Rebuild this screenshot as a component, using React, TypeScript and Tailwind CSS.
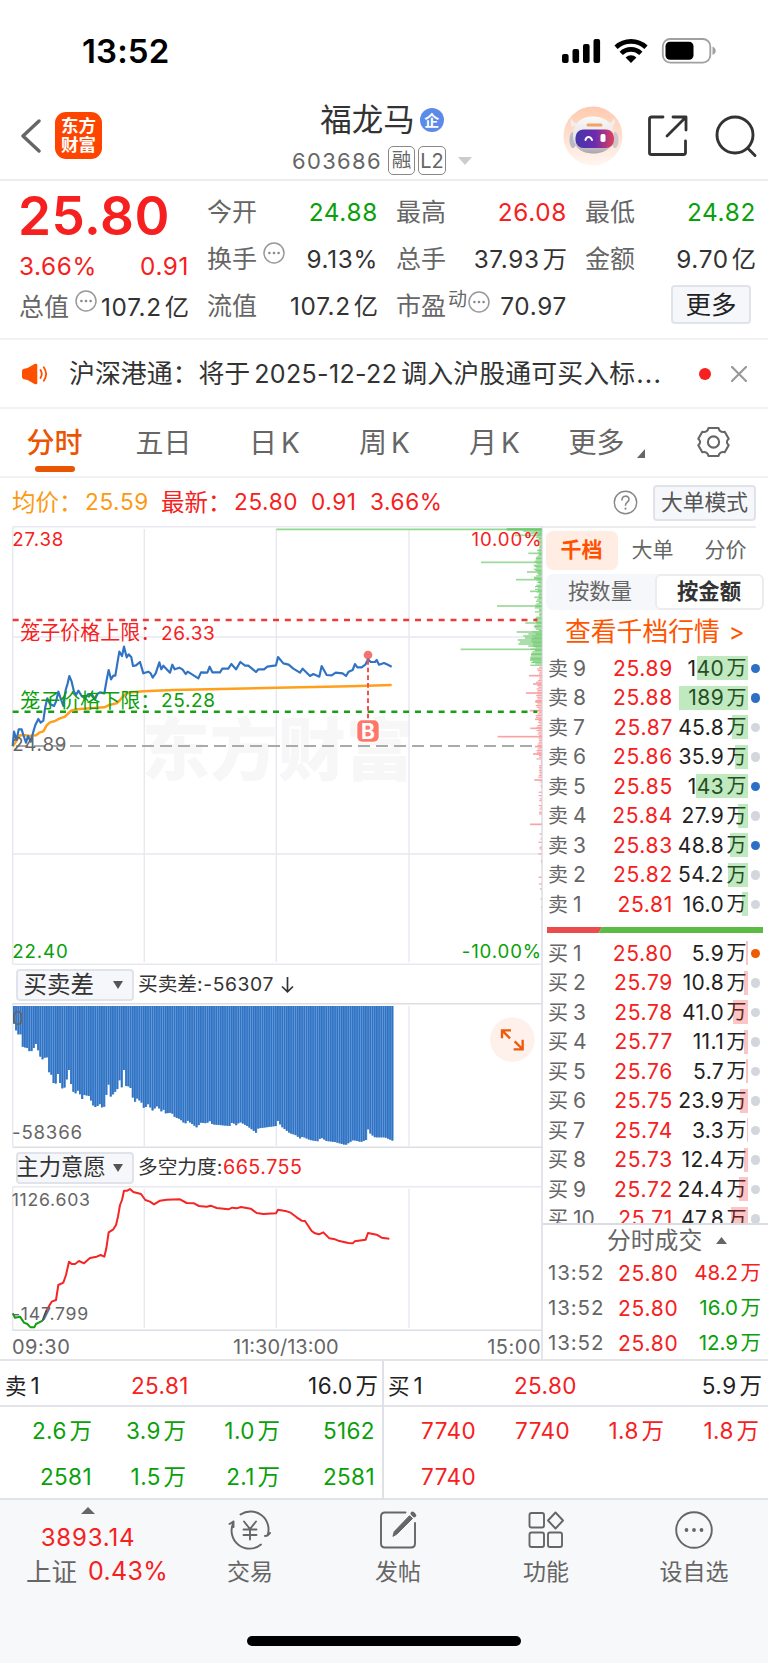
import React from 'react';

const PRICE = '38,678 42,635 50,660 56,628 65,628 70,645 78,668 84,648 92,665 100,635 106,615 115,597 122,608 130,602 136,560 142,535 150,552 162,558 168,545 175,515 182,535 190,558 197,510 203,490 208,468 215,485 222,515 228,525 235,512 245,528 255,535 265,522 275,522 285,538 292,522 300,517 313,520 320,480 326,450 333,478 340,467 346,467 352,430 358,395 366,408 372,380 380,412 386,403 394,412 399,438 408,436 420,426 430,460 445,455 452,460 458,473 467,460 478,427 484,448 490,437 510,458 517,434 524,448 538,443 548,449 557,462 563,455 595,475 603,457 622,458 629,440 637,457 660,457 667,446 685,446 694,432 708,448 721,426 735,437 745,437 768,456 775,448 792,448 802,440 828,436 834,411 850,430 866,434 880,446 900,458 908,446 930,468 940,462 958,470 965,438 980,465 995,466 1007,458 1028,460 1038,468 1046,455 1058,450 1065,432 1072,442 1085,442 1096,434 1104,418 1112,426 1125,426 1130,420 1137,434 1152,429 1165,435 1175,440';
const AVERAGE = '38,680 60,646 75,646 90,648 108,646 118,638 130,634 140,616 150,607 165,603 178,596 195,590 213,572 230,568 313,562 325,556 350,550 360,540 370,528 380,520 395,517 430,514 520,510 830,503 1050,499 1175,495';
const WILL = '140,1110 155,1085 168,1080 175,1035 190,1028 198,1005 207,965 215,972 225,972 237,963 252,970 270,954 290,950 302,945 313,950 319,925 326,877 340,868 348,855 354,830 360,795 366,780 372,752 382,752 390,747 400,756 423,762 436,780 450,785 462,793 480,782 500,779 540,778 560,789 582,790 597,798 620,800 632,797 650,804 685,808 697,803 710,805 723,801 752,806 770,819 790,822 828,820 834,809 860,814 872,818 890,832 905,842 915,843 935,873 945,880 957,883 970,877 988,895 1005,898 1015,902 1045,909 1058,910 1064,904 1097,899 1104,879 1130,884 1145,893 1168,896';

const ENVELOPE: [number, number][] = [
  [40, 245], [48, 270], [55, 283], [62, 283], [67, 320], [85, 325], [90, 338], [98, 330], [108, 312], [115, 332], [122, 352], [130, 360], [135, 352], [142, 352], [147, 396], [155, 405], [162, 434], [168, 430], [174, 402], [179, 425], [187, 445], [195, 442], [200, 420], [207, 390], [213, 430], [220, 455], [227, 460], [235, 450], [246, 478], [253, 465], [268, 468], [278, 495], [288, 502], [300, 492], [306, 502], [313, 500], [318, 470], [326, 433], [332, 470], [340, 462], [352, 448], [359, 420], [365, 445], [372, 390], [378, 438], [391, 440], [397, 470], [405, 485], [412, 475], [425, 488], [433, 507], [445, 492], [457, 512], [472, 498], [485, 515], [490, 508], [497, 520], [515, 518], [525, 532], [540, 537], [555, 552], [563, 542], [590, 562], [603, 548], [620, 550], [629, 543], [637, 553], [690, 558], [697, 546], [708, 556], [720, 546], [745, 560], [768, 578], [775, 565], [828, 558], [834, 543], [845, 560], [870, 580], [885, 584], [900, 595], [908, 590], [930, 600], [955, 604], [962, 592], [980, 603], [1005, 606], [1037, 615], [1060, 600], [1083, 606], [1098, 600], [1103, 565], [1112, 582], [1125, 592], [1155, 592], [1178, 602],
];

function depthAt(x: number) {
  for (let i = 1; i < ENVELOPE.length; i++) {
    const [x1, y1] = ENVELOPE[i];
    if (x <= x1) {
      const [x0, y0] = ENVELOPE[i - 1];
      return y0 + ((y1 - y0) * Math.max(0, x - x0)) / (x1 - x0);
    }
  }
  return ENVELOPE[ENVELOPE.length - 1][1];
}

const BARS = Array.from({ length: 173 }, (_, i) => {
  const x = 39 + i * 6.6;
  return { x, h: depthAt(x + 3) - 198 };
});

const GREEN_SPIKES: [number, number][] = [
  [33, 55], [39, 34], [46, 80], [100, 40], [127, 182], [156, 44], [179, 77], [214, 35], [232, 22], [258, 134], [309, 49], [336, 75], [342, 40], [348, 55], [354, 50], [360, 72], [366, 66], [372, 70], [378, 40], [388, 243], [402, 28], [420, 34],
];
const RED_SPIKES: [number, number][] = [
  [467, 38], [492, 26], [519, 47], [545, 20], [572, 36], [598, 20], [625, 34], [650, 132], [680, 20], [702, 26], [780, 22], [913, 35],
];
const noise = (i: number) => Math.abs(Math.sin(i * 12.9898) * 43758.5453) % 1;
const GREEN_NOISE = Array.from({ length: 102 }, (_, i) => {
  const y = 30 + i * 4;
  const base = y > 380 ? 18 : y > 330 ? 16 : 6;
  return { y, w: base + noise(i + 1) * (y > 60 && y < 110 ? 8 : 18) };
});
const RED_NOISE = Array.from({ length: 150 }, (_, i) => {
  const y = 440 + i * 5;
  const base = y < 720 ? 6 : 2;
  return { y, w: base + noise(i + 7) * (y < 720 ? 12 : 8), on: y < 760 || noise(i + 50) > 0.4 + (y - 760) / 900 };
});

const SELLS: [string, string, string, number, boolean][] = [
  ['9', '25.89', '140', 51, true], ['8', '25.88', '189', 69, true], ['7', '25.87', '45.8', 16, false], ['6', '25.86', '35.9', 13, false], ['5', '25.85', '143', 52, true], ['4', '25.84', '27.9', 10, false], ['3', '25.83', '48.8', 18, true], ['2', '25.82', '54.2', 20, false], ['1', '25.81', '16.0', 6, false],
];
const BUYS: [string, string, string, number, boolean][] = [
  ['1', '25.80', '5.9', 2, true], ['2', '25.79', '10.8', 4, false], ['3', '25.78', '41.0', 15, false], ['4', '25.77', '11.1', 4, false], ['5', '25.76', '5.7', 2, false], ['6', '25.75', '23.9', 8, false], ['7', '25.74', '3.3', 1, false], ['8', '25.73', '12.4', 4, false], ['9', '25.72', '24.4', 9, false], ['10', '25.71', '47.8', 17, false],
];

function Amount({ n, unit }: { n: string; unit?: string }) {
  return (
    <span className="whitespace-nowrap">
      {n}
      {unit && <span className="ml-[0.12em] tracking-normal">{unit}</span>}
    </span>
  );
}

function Dots({ className }: { className?: string }) {
  return (
    <svg className={className} width="22" height="22" viewBox="0 0 22 22">
      <circle cx="11" cy="11" r="10" fill="none" stroke="#999" strokeWidth="1.5" />
      <g fill="#888">
        <circle cx="6.4" cy="11" r="1.3" />
        <circle cx="11" cy="11" r="1.3" />
        <circle cx="15.6" cy="11" r="1.3" />
      </g>
    </svg>
  );
}

function StatusBar() {
  return (
    <div className="flex h-[102px] items-center justify-between pl-[82px] pr-[51px]">
      <span className="text-[33px] font-semibold leading-none tracking-[0.1px] text-black">13:52</span>
      <svg width="156" height="28" viewBox="0 0 156 28">
        <rect x="1" y="17" width="6.6" height="9" rx="2" />
        <rect x="11.5" y="12" width="6.6" height="14" rx="2" />
        <rect x="22" y="7" width="6.6" height="19" rx="2" />
        <rect x="32.5" y="2" width="6.6" height="24" rx="2" />
        <g fill="none" stroke="#000" strokeWidth="4.6">
          <path d="M55 10.3a22 22 0 0 1 30 0" />
          <path d="M60.2 16.4a14 14 0 0 1 19.600 0" />
        </g>
        <path d="M70 26l-5.4-5.6a7.8 7.8 0 0 1 10.8 0z" />
        <rect x="101.8" y="2" width="47.5" height="23.6" rx="7.5" fill="none" stroke="#a0a0a0" strokeWidth="1.8" />
        <rect x="104.5" y="4.8" width="28" height="18" rx="4.5" />
        <path d="M151.500 9.5c2 .8 3.2 2.3 3.2 4.3s-1.2 3.5-3.2 4.3z" fill="#a0a0a0" />
      </svg>
    </div>
  );
}

function Robot() {
  return (
    <svg width="60" height="60" viewBox="0 0 60 60">
      <defs>
        <linearGradient id="halo" x1="0" y1="0" x2="0" y2="1">
          <stop offset="0" stopColor="#ffc9ae" />
          <stop offset="1" stopColor="#fff6f1" />
        </linearGradient>
        <linearGradient id="visor" x1="0" y1="0" x2="1" y2="0">
          <stop offset="0" stopColor="#4438a8" />
          <stop offset=".5" stopColor="#6a2bb0" />
          <stop offset="1" stopColor="#e0405a" />
        </linearGradient>
        <linearGradient id="shell" x1="0" y1="0" x2="0" y2="1">
          <stop offset="0" stopColor="#fafafa" />
          <stop offset=".6" stopColor="#e6e2e4" />
          <stop offset="1" stopColor="#aaa4ac" />
        </linearGradient>
      </defs>
      <circle cx="30" cy="30" r="29.5" fill="url(#halo)" />
      <path d="M9 21c-2-3-2-6-.5-8.500 1 3.500 3.500 5 7 5zM49 21c3-3 4-6 2-8.500-1 3-3.500 4.500-7 5z" fill="#f3eeee" />
      <ellipse cx="10" cy="34" rx="3.500" ry="8" fill="#b9b9c6" />
      <ellipse cx="52" cy="34" rx="3.500" ry="8" fill="#cdc6cd" />
      <path d="M30 10.500c11 0 19.500 6 21 16 1 12-6 21-20.500 21S9 39 10 27c1-10.500 9-16.500 20-16.500z" fill="url(#shell)" />
      <rect x="23.500" y="17.500" width="16" height="3" rx="1.500" fill="#f2a267" />
      <rect x="12.500" y="23.500" width="38.500" height="18.500" rx="8" fill="url(#visor)" />
      <path d="M22.500 34c1-4 5-4 6.500 0" fill="none" stroke="#fff" strokeWidth="2" strokeLinecap="round" />
      <rect x="37.500" y="28" width="5" height="8" rx="1.800" fill="#fff" />
    </svg>
  );
}

function Header() {
  return (
    <header className="flex h-[79px] border-b-2 border-[#ececee]">
      <div className="flex w-[220px] shrink-0 items-start pl-[20px] pt-[10px]">
        <svg className="mt-[7px]" width="22" height="34" viewBox="0 0 22 34">
          <path d="M19 2L3 17 19 32" fill="none" stroke="#666" strokeWidth="3.4" strokeLinecap="round" strokeLinejoin="round" />
        </svg>
        <div className="ml-[13px] flex h-[47px] w-[47px] flex-col items-center justify-center rounded-[11px] bg-[#ff4400] pb-[1px] text-[17.500px] font-bold leading-[19.500px] text-white">
          <span>东方</span>
          <span>财富</span>
        </div>
      </div>
      <div className="flex w-[324px] shrink-0 flex-col items-center">
        <div className="flex h-[36px] items-center text-[31.500px] leading-none text-[#333]">
          <span>福龙马</span>
          <span className="ml-[5px] flex h-[24px] w-[24px] items-center justify-center rounded-full bg-[#5b8ae8] text-[15px] font-bold text-white">企</span>
        </div>
        <div className="mt-[7px] flex h-[31px] items-center text-[22px] leading-none text-[#666]">
          <span className="tracking-[1.3px]">603686</span>
          <span className="ml-[6px] flex h-[29px] w-[27px] items-center justify-center rounded-[5px] border-[1.500px] border-[#888] text-[19.500px]">融</span>
          <span className="ml-[3px] flex h-[29px] w-[28px] items-center justify-center rounded-[5px] border-[1.500px] border-[#888] text-[20px]">L2</span>
          <svg className="ml-[12px]" width="14" height="8" viewBox="0 0 14 8"><path d="M0 0h14L7 8z" fill="#ccc" /></svg>
        </div>
      </div>
      <div className="flex flex-1 items-start pl-[19px] pt-[4px]">
        <Robot />
        <svg className="ml-[24px] mt-[8px]" width="42" height="42" viewBox="0 0 42 42" fill="none" stroke="#333" strokeWidth="2.8" strokeLinecap="round" strokeLinejoin="round">
          <path d="M16 3H4.500Q2.500 3 2.500 5v34q0 1.500 2 1.500h32q2 0 2-2V27" />
          <path d="M26 3H39v13M38.500 3.500L20 22" />
        </svg>
        <svg className="ml-[26px] mt-[8px]" width="44" height="44" viewBox="0 0 44 44" fill="none" stroke="#333" strokeWidth="2.9" strokeLinecap="round">
          <circle cx="20" cy="21" r="18" />
          <path d="M33 34.500l7 7" />
        </svg>
      </div>
    </header>
  );
}

function Stat({ label, icon, children, color = 'text-[#333]' }: { label: React.ReactNode; icon?: boolean; children: React.ReactNode; color?: string }) {
  return (
    <div className="flex h-[47px] items-center justify-between">
      <span className="relative flex items-center text-[25px] text-[#666]">
        {label}
        {icon && <Dots className="absolute left-[56px] -top-[5px]" />}
      </span>
      <span className={`tracking-[0.7px] ${color}`}>{children}</span>
    </div>
  );
}

function Quote() {
  return (
    <section className="grid h-[159px] grid-cols-[170px_171px_171px_171px] gap-x-[18px] border-b-2 border-[#f2f2f4] pl-[19px] pt-[8px] text-[24.300px] leading-none">
      <div>
        <div className="-ml-[1px] flex h-[54px] items-center text-[53px] font-semibold tracking-[0.5px] text-[#f62020]">25.80</div>
        <div className="flex h-[46px] items-center justify-between tracking-[0.6px] text-[#f62020]">
          <span>3.66%</span>
          <span>0.91</span>
        </div>
        <div className="-mt-[5px]"><Stat label="总值" icon><span className="-ml-[6px]"><Amount n="107.2" unit="亿" /></span></Stat></div>
      </div>
      <div>
        <Stat label="今开" color="text-[#09a009]">24.88</Stat>
        <Stat label="换手" icon>9.13%</Stat>
        <Stat label="流值"><Amount n="107.2" unit="亿" /></Stat>
      </div>
      <div>
        <Stat label="最高" color="text-[#f62020]">26.08</Stat>
        <Stat label="总手"><Amount n="37.93" unit="万" /></Stat>
        <Stat label={<><span>市盈</span><span className="-mt-[14px] ml-[2px] text-[19px]">动</span><Dots className="-mt-[10px] ml-[1px]" /></>}>70.97</Stat>
      </div>
      <div>
        <Stat label="最低" color="text-[#09a009]">24.82</Stat>
        <Stat label="金额"><Amount n="9.70" unit="亿" /></Stat>
        <div className="flex justify-end pr-[5px] pt-[2px]">
          <button className="flex h-[39px] w-[80px] items-center justify-center rounded-[4px] border-2 border-[#e0e3ea] bg-[#f6f7fa] text-[25.500px] text-[#222]">更多</button>
        </div>
      </div>
    </section>
  );
}

function News() {
  return (
    <div className="flex h-[69px] items-center border-b-2 border-[#f2f2f4] pl-[22px] text-[25.900px] leading-none text-[#333]">
      <svg width="26" height="22" viewBox="0 0 26 22">
        <path d="M0 8q0-2 2-2.300L5.500 5 13 .8Q15.300.2 15.300 2v18q0 1.800-2.300 1.200L5.500 17 2 16.300Q0 16 0 14z" fill="#ff5000" />
        <path d="M18.500 7q2.500 4 0 8M21.800 4.200q4.600 6.800 0 13.600" fill="none" stroke="#ff5000" strokeWidth="1.8" strokeLinecap="round" />
      </svg>
      <span className="ml-[21px] w-[600px] whitespace-nowrap">
        沪深港通：将于<span className="ml-[4px] mr-[4px] text-[25px] tracking-[0.35px]">2025-12-22</span><span className="tracking-[0.1px]">调入沪股通可买入标</span><span className="ml-[1px] tracking-[1.200px]">...</span>
      </span>
      <span className="ml-[29.500px] h-[12px] w-[12px] rounded-full bg-[#f62020]" />
      <svg className="ml-[20px]" width="16" height="16" viewBox="0 0 16 16"><path d="M1 1l14 14M15 1L1 15" stroke="#999" strokeWidth="2.2" strokeLinecap="round" /></svg>
    </div>
  );
}

function Tabs() {
  return (
    <nav className="grid h-[69px] grid-cols-[109px_109px_113px_107px_113px_137px_80px] border-b-2 border-[#f2f2f4] text-[28px] leading-none text-[#666]">
      <div className="flex flex-col items-center pt-[20px] font-medium text-[#ea5504]">
        <span>分时</span>
        <span className="mt-[9px] h-[6px] w-[40px] rounded-full bg-[#ea5504]" />
      </div>
      <div className="flex justify-center pt-[20px]">五日</div>
      <div className="flex justify-center pt-[20px]">日<span className="ml-[4px]">K</span></div>
      <div className="flex justify-center pt-[20px]">周<span className="ml-[4px]">K</span></div>
      <div className="flex justify-center pt-[20px]">月<span className="ml-[4px]">K</span></div>
      <div className="flex pl-[17.500px] pt-[20px]">
        更多
        <svg className="ml-[12px] mt-[20px]" width="8" height="9" viewBox="0 0 8 9"><path d="M8 0v9H0z" fill="#666" /></svg>
      </div>
      <div className="flex pl-[9px] pt-[17px]">
        <svg width="33" height="32" viewBox="0 0 33 32" fill="none" stroke="#666" strokeWidth="2.1" strokeLinejoin="round">
          <path d="M11.500 2h10q1.200 5 6.200 3.700l4 7q-3.600 3.300 0 6.600l-4 7q-5-1.300-6.200 3.700h-10q-1.200-5-6.200-3.700l-4-7q3.600-3.300 0-6.600l4-7Q10.300 7 11.500 2z" />
          <circle cx="16.500" cy="16" r="5.600" />
        </svg>
      </div>
    </nav>
  );
}

function InfoRow() {
  return (
    <div className="flex h-[48px] items-center pl-[12px] pr-[12px] pt-[1px] text-[22.600px] leading-none tracking-[0.6px] text-[#f62020]">
      <span className="w-[73px] whitespace-nowrap text-[23.500px] tracking-normal text-[#fb9a12]">均价：</span>
      <span className="w-[76px] text-[#fb9a12]">25.59</span>
      <span className="w-[73px] whitespace-nowrap text-[23.500px] tracking-normal">最新：</span>
      <span className="w-[77px]">25.80</span>
      <span className="w-[59px]">0.91</span>
      <span>3.66%</span>
      <svg className="ml-auto" width="25" height="25" viewBox="0 0 25 25" fill="none" stroke="#888" strokeLinecap="round">
        <circle cx="12.500" cy="12.500" r="11.200" strokeWidth="1.4" />
        <path d="M9 10c0-5 7-5 7-.6 0 2.600-3.500 2.900-3.500 5.800" strokeWidth="1.6" />
        <path d="M12.500 18.500v.3" strokeWidth="2" />
      </svg>
      <button className="ml-[15px] flex h-[36px] w-[103px] items-center justify-center rounded-[4px] border-2 border-[#e0e3ea] bg-[#f6f7fa] text-[21.800px] tracking-normal text-[#555]">大单模式</button>
    </div>
  );
}

const GRID_X = [433, 829, 1227];

function MainChart() {
  return (
    <svg className="block" width="543" height="439" viewBox="0 18 1629 1317">
      <g fill="#f7f7f7" fontSize="204" fontWeight="900">
        <text x="425" y="764">东方财富</text>
      </g>
      <g stroke="#e8e9f0" strokeWidth="4.5" fill="none">
        <path d="M38 20H1625M38 20V1332M38 1333H1625M38 351H1625M38 1002H1625" />
        {GRID_X.map((x) => <path key={x} d={`M${x} 27V1326`} />)}
      </g>
      <path d="M829 28H1625" stroke="#8fd98f" strokeWidth="5" />
      <path d="M1520 28H1625" stroke="#6cc86c" strokeWidth="7" />
      <g fill="#7fd07f">
        {GREEN_NOISE.map((b) => <rect key={b.y} x={1625 - b.w} y={b.y} width={b.w} height="3.4" />)}
        {GREEN_SPIKES.map(([y, w]) => <rect key={y} x={1625 - w} y={y - 2.5} width={w} height="5" opacity=".8" />)}
      </g>
      <g fill="#f9a3a6">
        {RED_NOISE.filter((b) => b.on).map((b) => <rect key={b.y} x={1625 - b.w} y={b.y} width={b.w} height="3.6" />)}
        {RED_SPIKES.map(([y, w]) => <rect key={y} x={1625 - w} y={y - 2.5} width={w} height="5" />)}
      </g>
      <path d="M38 300H1612" stroke="#f03a3a" strokeWidth="7.5" strokeDasharray="18 17.500" />
      <path d="M38 575H1612" stroke="#16a016" strokeWidth="7.5" strokeDasharray="18 17.500" />
      <path d="M38 678H1612" stroke="#aaa" strokeWidth="6.5" strokeDasharray="36 18" strokeDashoffset="-10" />
      <polyline points={AVERAGE} fill="none" stroke="#ff9f1a" strokeWidth="7.5" strokeLinejoin="round" />
      <polyline points={PRICE} fill="none" stroke="#3073c4" strokeWidth="6.5" strokeLinejoin="round" />
      <g fontSize="56" letterSpacing="2.6">
        <text x="37" y="77" fill="#f62020">27.38</text>
        <text x="1627" y="77" fill="#f62020" textAnchor="end">10.00%</text>
        <text x="37" y="694" fill="#666">24.89</text>
        <text x="37" y="1314" fill="#09a009">22.40</text>
        <text x="1626" y="1314" fill="#09a009" textAnchor="end">-10.00%</text>
      </g>
      <g fill="#f62020">
        <text x="61" y="360" fontSize="60">笼子价格上限：</text>
        <text x="483" y="359" fontSize="57" letterSpacing="2">26.33</text>
      </g>
      <g fill="#09a009">
        <text x="61" y="563" fontSize="60">笼子价格下限：</text>
        <text x="483" y="562" fontSize="57" letterSpacing="2">25.28</text>
      </g>
      <path d="M1104 420V600" stroke="#f5504a" strokeWidth="6" strokeDasharray="14 9" />
      <circle cx="1104" cy="405" r="13" fill="#f0504c" opacity=".8" />
      <rect x="1069" y="598" width="70" height="70" rx="17" fill="#fff" />
      <rect x="1072" y="601" width="64" height="64" rx="14" fill="#ff766b" />
      <text x="1104" y="656" fontSize="63" fontWeight="700" fill="#fff" textAnchor="middle">B</text>
    </svg>
  );
}

function Selector({ label, className }: { label: string; className: string }) {
  return (
    <button className={`flex h-[32px] w-[118px] items-center whitespace-nowrap rounded-[4px] border-2 border-[#e0e3ea] bg-[#f6f7fa] leading-none text-[#333] ${className}`}>
      <span className="-ml-[1.500px]">{label}</span>
      <svg className="ml-auto mr-[9px] shrink-0" width="10" height="8" viewBox="0 0 10 8"><path d="M0 0h10L5 8z" fill="#555" /></svg>
    </button>
  );
}

function DiffChart() {
  return (
    <svg className="block" width="543" height="145" viewBox="0 189 1629 435">
      <g stroke="#e8e9f0" strokeWidth="4.5" fill="none">
        <path d="M38 189V620" />
        {GRID_X.map((x) => <path key={x} d={`M${x} 198V618`} />)}
      </g>
      <path d="M38 191.500H1625M38 621.500H1625" stroke="#dcdee3" strokeWidth="4.5" />
      {BARS.map((b) => (
        <g key={b.x}>
          <rect x={b.x} y="198" width="6.7" height={b.h} fill="#6a9ddb" />
          <rect x={b.x} y="198" width="5" height={b.h} fill="#3073c4" />
        </g>
      ))}
      <g fontSize="56" fill="#666" letterSpacing="2.4">
        <text x="37" y="255">0</text>
        <text x="36" y="598">-58366</text>
      </g>
      <circle cx="1537" cy="299" r="67" fill="#fef1eb" />
      <g fill="none" stroke="#ee5a0a" strokeWidth="7">
        <path d="M1506 295V271H1533M1507 272L1530 295M1568 299V328H1541M1567 327L1544 304" />
      </g>
    </svg>
  );
}

function WillChart() {
  return (
    <svg className="block" width="543" height="145" viewBox="0 738 1629 435">
      <g stroke="#e8e9f0" strokeWidth="4.5" fill="none">
        <path d="M38 740V1172M38 740H1625" />
        {GRID_X.map((x) => <path key={x} d={`M${x} 746V1164`} />)}
      </g>
      <path d="M38 1170.500H1625" stroke="#dcdee3" strokeWidth="4.5" />
      <g fill="none" strokeWidth="6" strokeLinejoin="round">
        <polyline points="38,1120 45,1133 60,1130 72,1148 82,1152 92,1162 103,1162 108,1152 128,1142" stroke="#12a012" />
        <polyline points="128,1142 134,1125 140,1110" stroke="#444" />
        <polyline points={WILL} stroke="#f62424" />
      </g>
      <g fontSize="53" fill="#666" letterSpacing="2.2">
        <text x="35" y="797">1126.603</text>
        <text x="36" y="1139">-147.799</text>
      </g>
    </svg>
  );
}

function Charts() {
  return (
    <div className="h-[834px] w-[543px] border-r-2 border-[#e3e5ea]">
      <MainChart />
      <div className="flex h-[38px] items-center pl-[16px] pt-[1px] leading-none text-[#333]">
        <Selector label="买卖差" className="pl-[7px] text-[23.500px]" />
        <span className="ml-[4px] pt-[1px] text-[19.700px]">买卖差</span>
        <span className="pt-[1px] text-[19.300px] tracking-[0.6px]">:-56307</span>
        <svg className="ml-[7px]" width="13" height="16" viewBox="0 0 13 16" fill="none" stroke="#333" strokeWidth="1.7"><path d="M6.500 0v14.500M1 9.500l5.500 5.300L12 9.500" /></svg>
      </div>
      <DiffChart />
      <div className="flex h-[38px] items-center pl-[16px] pt-[1px] leading-none text-[#333]">
        <Selector label="主力意愿" className="text-[22.300px]" />
        <span className="ml-[4px] pt-[1px] text-[19.700px]">多空力度</span>
        <span className="pt-[1px] text-[19.700px] tracking-[0.500px]">:<span className="text-[#f62020]">665.755</span></span>
      </div>
      <WillChart />
      <div className="flex h-[30px] items-center pl-[12px] pt-[1px] text-[20px] leading-none tracking-[0.500px] text-[#666]">
        <span className="w-[221px]">09:30</span>
        <span className="flex-1 -tracking-[0px]">11:30/13:00</span>
        <span>15:00</span>
      </div>
    </div>
  );
}

function Level({ side, row }: { side: '卖' | '买'; row: [string, string, string, number, boolean] }) {
  const [n, price, vol, w, active] = row;
  const sell = side === '卖';
  const dot = active ? (sell ? 'bg-[#2d6fc4]' : 'bg-[#ee5a00]') : 'bg-[#d3d6dd]';
  return (
    <div className="flex h-[29.500px] shrink-0 items-center leading-none">
      <span className="w-[59px] whitespace-nowrap text-[21px] text-[#666]">
        <span className="text-[20px]">{side}</span>
        <span className="ml-[5px]">{n}</span>
      </span>
      <span className="w-[66px] text-right text-[21px] tracking-[0.700px] text-[#f62020]">{price}</span>
      <span className="relative flex h-[24px] w-[75px] items-center justify-end whitespace-nowrap pr-[1px] text-[21px] tracking-[0.400px] text-[#222]">
        {vol}
        <span className="ml-[2.500px] text-[20px]">万</span>
        <span className={`absolute right-0 top-0 h-[24px] ${sell ? 'bg-[#2fb52f]/30' : 'bg-[#f03030]/28'}`} style={{ width: w }} />
      </span>
      <span className={`ml-[2.500px] h-[9.500px] w-[9.500px] rounded-full ${dot}`} />
    </div>
  );
}

function Trade({ value, color }: { value: string; color: string }) {
  return (
    <div className="flex h-[35px] items-center text-[20.500px] leading-none">
      <span className="w-[70px] tracking-[0.900px] text-[#666]">13:52</span>
      <span className="text-[21px] tracking-[0.700px] text-[#f62020]">25.80</span>
      <span className={`ml-auto text-[20.500px] ${color}`}><Amount n={value} unit="万" /></span>
    </div>
  );
}

function Book() {
  return (
    <aside className="flex h-[835px] w-[225px] flex-col">
      <div className="mr-[12px] h-[2px] shrink-0 bg-[#ececf0]" />
      <div className="flex h-[45px] shrink-0 items-start pl-[2.500px] pt-[3px] text-[21px] leading-[37px] text-[#666]">
        <span className="flex h-[39px] w-[72px] justify-center rounded-[7px] bg-[#ffede4] font-bold text-[#ff5000]">千档</span>
        <span className="ml-[14px]">大单</span>
        <span className="ml-[31px]">分价</span>
      </div>
      <div className="ml-[2.500px] mt-[1px] flex h-[36px] w-[218px] shrink-0 rounded-[7px] bg-[#f6f7fa] pb-[1px] text-[21.300px] leading-none text-[#666]">
        <span className="flex flex-1 items-center justify-center">按数量</span>
        <span className="-mb-[1px] flex w-[109px] items-center justify-center rounded-[6px] border-2 border-[#ececf0] bg-white pb-[1px] font-bold text-[#333]">按金额</span>
      </div>
      <div className="flex h-[44px] shrink-0 items-center pl-[22px] text-[25.800px] leading-none text-[#ff5500]">
        查看千档行情<span className="ml-[9px] text-[24px]">&gt;</span>
      </div>
      <div className="-mt-[0.500px] shrink-0 pl-[5px]">
        {SELLS.map((r) => <Level key={r[0]} side="卖" row={r} />)}
      </div>
      <svg className="ml-[4px] mt-[8px] shrink-0" width="216" height="6" viewBox="0 0 216 6">
        <path d="M0 0h55l-3.500 6H0z" fill="#ea4c4c" />
        <path d="M55 0h161v6H51.500z" fill="#5abb45" />
      </svg>
      <div className="mt-[5.500px] flex min-h-0 flex-1 flex-col overflow-hidden border-b-2 border-[#d9dce3] pl-[5px]">
        {BUYS.map((r) => <Level key={r[0]} side="买" row={r} />)}
      </div>
      <div className="flex h-[31px] shrink-0 items-center pl-[64px] text-[23.800px] leading-none text-[#666]">
        分时成交
        <svg className="ml-[14px]" width="11" height="7" viewBox="0 0 11 7"><path d="M0 7h11L5.500 0z" fill="#666" /></svg>
      </div>
      <div className="shrink-0 pl-[5px] pr-[7px]">
        <Trade value="48.2" color="text-[#f62020]" />
        <Trade value="16.0" color="text-[#09a009]" />
        <Trade value="12.9" color="text-[#09a009]" />
      </div>
    </aside>
  );
}

function Cell({ v, className }: { v: string; className: string }) {
  const wan = v.endsWith('万');
  return (
    <span className={`text-right ${className}`}>
      <Amount n={wan ? v.slice(0, -1) : v} unit={wan ? '万' : undefined} />
    </span>
  );
}

function Queue({ label, price, vol, cells, color, pad }: { label: string; price: string; vol: string; cells: string[]; color: string; pad: string }) {
  return (
    <div className="leading-none">
      <div className={`grid h-[46px] grid-cols-[126px_1fr_auto] items-center border-b-2 border-[#e3e4ea] pt-[6px] text-[22.500px] text-[#222] ${pad}`}>
        <span className="text-[21.500px]">{label}<span className="ml-[4px] text-[22.500px]">1</span></span>
        <span className="tracking-[0.400px] text-[#f62020]">{price}</span>
        <span className="tracking-[0.600px]"><Amount n={vol} unit="万" /></span>
      </div>
      <div className="grid auto-rows-[45.500px] grid-cols-[92px_94px_94px_95px] items-center pt-[1.500px] text-[22.500px] tracking-[0.400px]">
        {cells.map((c, i) => <Cell key={i} v={c} className={color} />)}
      </div>
    </div>
  );
}

function Bottom() {
  return (
    <section className="grid h-[139px] grid-cols-[384px_384px] border-t-2 border-[#e3e4ea]">
      <div className="border-r-2 border-[#dfe1e7]">
        <Queue label="卖" price="25.81" vol="16.0" pad="pl-[5px] pr-[4px]" color="text-[#09a009]" cells={['2.6万', '3.9万', '1.0万', '5162', '2581', '1.5万', '2.1万', '2581']} />
      </div>
      <Queue label="买" price="25.80" vol="5.9" pad="pl-[4px] pr-[6px]" color="text-[#f62020]" cells={['7740', '7740', '1.8万', '1.8万', '7740']} />
    </section>
  );
}

function NavItem({ label, children }: { label: string; children: React.ReactNode }) {
  return (
    <div className="flex w-[148px] flex-col items-center pt-[9px]">
      <svg width="44" height="42" viewBox="0 0 44 42" fill="none" stroke="#666" strokeWidth="1.9" strokeLinecap="round" strokeLinejoin="round">{children}</svg>
      <span className="mt-[10px]">{label}</span>
    </div>
  );
}

function BottomNav() {
  return (
    <footer className="flex h-[165px] flex-col border-t-2 border-[#e2e3e6] bg-[#f7f8fa]">
      <div className="flex h-[136px] text-[23px] leading-none text-[#666]">
        <div className="flex w-[176px] flex-col items-center pt-[7px]">
          <svg width="14" height="7" viewBox="0 0 14 7"><path d="M0 7h14L7 0z" fill="#666" /></svg>
          <span className="mt-[12px] text-[24px] tracking-[0.800px] text-[#f62020]">3893.14</span>
          <span className="mt-[9px] flex items-center whitespace-nowrap pl-[18px] text-[25.500px]">上证<span className="ml-[11px] text-[25px] tracking-[0.300px] text-[#f62020]">0.43%</span></span>
        </div>
        <NavItem label="交易">
          <path d="M12.500 5.500A18 18 0 0 1 39.500 26.500M39.500 26.500l2.500-2.500M39.500 26.500l-2.500.5M33 35.500A18 18 0 0 1 5.500 13.500M5.500 12.500V18M5.500 12.500L1.500 15" />
          <path d="M16 12.500l6 7.500 6-7.500M22 20v10.500M15.500 20.500h13M15.500 26h13" />
        </NavItem>
        <NavItem label="发帖">
          <path d="M29.500 3.500H9Q5 3.500 5 7.500v27q0 4 4 4h26q4 0 4-4V14" />
          <path d="M17 27l1.300-4.500L33.500 6.700l3 2.800L21 25z" fill="#666" strokeWidth="1" />
          <path d="M36.500 4.500l1.800 1.800" strokeWidth="4" />
        </NavItem>
        <NavItem label="功能">
          <rect x="5.500" y="4" width="14.500" height="14.500" rx="2" />
          <rect x="5.500" y="23.500" width="14.500" height="14.500" rx="2" />
          <rect x="24" y="23.500" width="14" height="14.500" rx="2" />
          <path d="M31.500 3.500l7.500 8-7.500 8-7.500-8z" />
        </NavItem>
        <NavItem label="设自选">
          <circle cx="22" cy="21" r="17.800" />
          <g fill="#666" stroke="none">
            <circle cx="14.500" cy="21" r="1.900" />
            <circle cx="22" cy="21" r="1.900" />
            <circle cx="29.500" cy="21" r="1.900" />
          </g>
        </NavItem>
      </div>
      <div className="ml-[247px] h-[10px] w-[274px] rounded-full bg-black" />
    </footer>
  );
}

export default function App() {
  return (
    <div className="h-[1663px] w-[768px] overflow-hidden bg-white font-['Inter','Noto_Sans_CJK_SC',sans-serif]">
      <StatusBar />
      <Header />
      <Quote />
      <News />
      <Tabs />
      <InfoRow />
      <div className="flex h-[833px]">
        <Charts />
        <Book />
      </div>
      <Bottom />
      <BottomNav />
    </div>
  );
}
